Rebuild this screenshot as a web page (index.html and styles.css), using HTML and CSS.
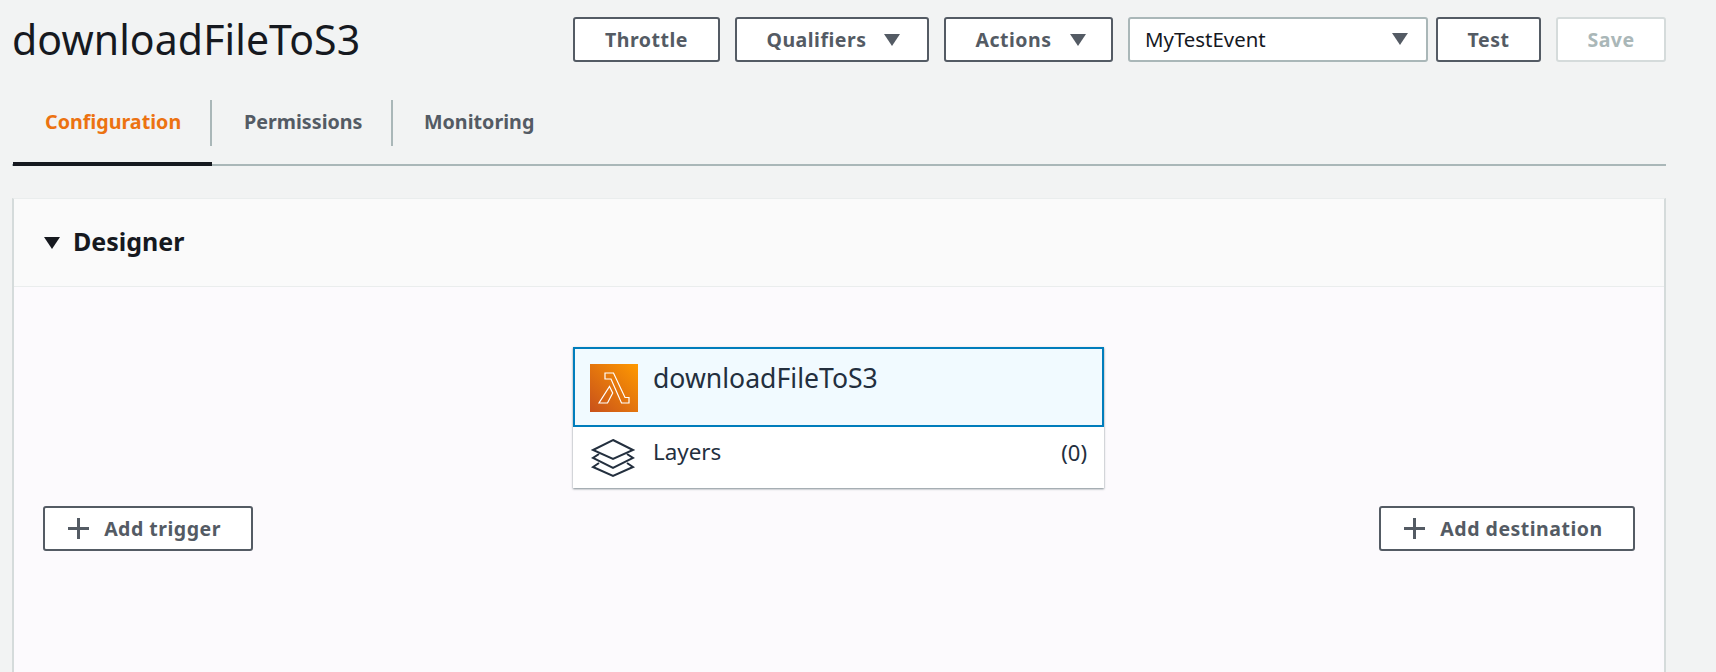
FILE: index.html
```html
<!DOCTYPE html>
<html lang="en">
<head>
<meta charset="utf-8">
<title>downloadFileToS3</title>
<link rel="stylesheet" href="styles.css">
</head>
<body>
<div class="page">
  <header class="head">
    <h1 class="title">downloadFileToS3</h1>
    <div class="actions">
      <button class="btn btn-throttle">Throttle</button>
      <button class="btn btn-qual">Qualifiers<span class="caret"></span></button>
      <button class="btn btn-act">Actions<span class="caret"></span></button>
      <div class="select"><span>MyTestEvent</span><span class="caret"></span></div>
      <button class="btn btn-test">Test</button>
      <button class="btn btn-save">Save</button>
    </div>
  </header>
  <nav class="tabs">
    <a class="tab tab-active">Configuration</a>
    <a class="tab">Permissions</a>
    <a class="tab tab-last">Monitoring</a>
  </nav>
  <section class="panel">
    <div class="panel-head"><span class="caret caret-dark"></span><h2 class="panel-title">Designer</h2></div>
    <div class="panel-body">
      <div class="card">
        <div class="fn">
          <svg class="fn-icon" width="48" height="48" viewBox="0 0 48 48">
            <defs><linearGradient id="lg" x1="0" y1="1" x2="1" y2="0"><stop offset="0" stop-color="#c8511b"/><stop offset="1" stop-color="#ff9900"/></linearGradient></defs>
            <rect width="48" height="48" fill="url(#lg)"/>
            <path d="M15 9h8.500l11.500 24.500h4v5.500h-7.500L21 15h-6zM19.500 22.500l3.200 6.500-5.200 10H9z" fill="none" stroke="#fff" stroke-width="1.200"/>
          </svg>
          <span class="fn-name">downloadFileToS3</span>
        </div>
        <div class="layers">
          <svg class="layers-icon" width="46" height="40" viewBox="0 0 46 40" fill="none" stroke="#232f3e" stroke-width="2">
            <path d="M23 2 43 12 23 21 3 12z"/>
            <path d="M9 16 3 20 23 30 43 20 37 16"/>
            <path d="M9 25 3 29 23 38 43 29 37 25"/>
          </svg>
          <span class="layers-name">Layers</span>
          <span class="layers-count">(0)</span>
        </div>
      </div>
      <div class="add-row">
        <button class="btn btn-add btn-trigger"><span class="plus"></span>Add trigger</button>
        <button class="btn btn-add btn-dest"><span class="plus"></span>Add destination</button>
      </div>
    </div>
  </section>
</div>
</body>
</html>
```
FILE: styles.css
```css
* { box-sizing: border-box; }
html, body { margin: 0; height: 100%; overflow: hidden; }
body { background: #f2f3f3; font-family: "Noto Sans", sans-serif; color: #16191f; }
.page { height: 672px; padding: 17px 50px 0 12px; overflow: hidden; }
.head { display: flex; align-items: flex-start; justify-content: space-between; height: 83px; }
.title { margin: -1px 0 0; font-size: 41px; font-weight: 400; line-height: 46px; letter-spacing: 0.1px; }
.actions { display: flex; }
.btn { height: 45px; border: 2px solid #545b64; border-radius: 3px; background: #fff; color: #545b64; font: 700 19.500px "Noto Sans", sans-serif; letter-spacing: .5px; display: flex; align-items: center; justify-content: center; padding: 0; }
.caret { display: inline-block; width: 0; height: 0; border-left: 8px solid transparent; border-right: 8px solid transparent; border-top: 12px solid #545b64; }
.btn .caret { margin-left: 18px; }
.btn-throttle { width: 147px; margin-right: 15px; }
.btn-qual { width: 194px; margin-right: 15px; padding-left: 3px; }
.btn-act { width: 169px; margin-right: 15px; padding-left: 4px; }
.select { width: 300px; height: 45px; border: 2px solid #aab7b8; border-radius: 3px; background: #fff; display: flex; align-items: center; justify-content: space-between; padding: 0 18px 2px 15px; font-size: 20.400px; margin-right: 8px; }
.btn-test { width: 105px; margin-right: 15px; }
.btn-save { width: 110px; border-color: #d5dbdb; color: #aab7b8; }
.tabs { display: flex; height: 66px; border-bottom: 2px solid #aab7b8; }
.tab { height: 66px; padding: 8px 0 0; font-size: 19.700px; font-weight: 700; color: #545b64; position: relative; display: block; }
.tab::after { content: ""; position: absolute; right: 0; top: 0; width: 2px; height: 46px; background: #aab7b8; }
.tab-active { color: #ec7211; width: 199px; margin-left: 1px; padding-left: 32px; border-bottom: 4px solid #16191f; }
.tab:nth-child(2) { width: 181px; padding-left: 32px; }
.tab-last { padding-left: 31px; }
.tab-last::after { display: none; }
.panel { margin-top: 32px; height: 500px; background: #fcfafd; border: 1px solid #eaeded; border-left: 2px solid #d5dbdb; border-right: 2px solid #d5dbdb; border-bottom: 0; }
.panel-head { height: 88px; display: flex; align-items: center; padding-left: 30px; background: #fafafa; border-bottom: 1px solid #eaeded; }
.caret-dark { border-left-width: 8px; border-right-width: 8px; border-top-color: #16191f; margin-right: 13px; }
.panel-title { margin: -4px 0 0; font-size: 25px; font-weight: 700; }
.panel-body { padding: 60px 29px 0 29px; display: flex; flex-direction: column; }
.card { width: 531px; margin: 0 auto 0 530px; background: #fff; box-shadow: 0 1px 2px rgba(0,28,36,.5); }
.fn { height: 80px; background: #f1faff; border: 2px solid #007dbc; display: flex; align-items: flex-start; padding: 15px 0 0 15px; }
.fn-icon { flex: none; }
.fn-name { margin-left: 15px; margin-top: -2px; font-size: 26.600px; line-height: 32px; color: #232f3e; }
.layers { height: 61px; display: flex; align-items: flex-start; padding: 11px 17px 0 17px; font-size: 22.400px; color: #232f3e; }
.layers-icon { flex: none; }
.layers-name { margin-left: 17px; line-height: 28px; }
.layers-count { margin-left: auto; font-size: 22px; line-height: 28px; }
.add-row { display: flex; justify-content: space-between; margin-top: 18px; }
.btn-trigger { width: 210px; padding-right: 7px; }
.btn-dest { width: 256px; padding-right: 7px; }
.plus { width: 21px; height: 21px; margin-right: 15px; position: relative; flex: none; }
.plus::before { content: ""; position: absolute; left: 0; top: 9px; width: 21px; height: 3px; background: #545b64; }
.plus::after { content: ""; position: absolute; left: 9px; top: 0; width: 3px; height: 21px; background: #545b64; }
```
